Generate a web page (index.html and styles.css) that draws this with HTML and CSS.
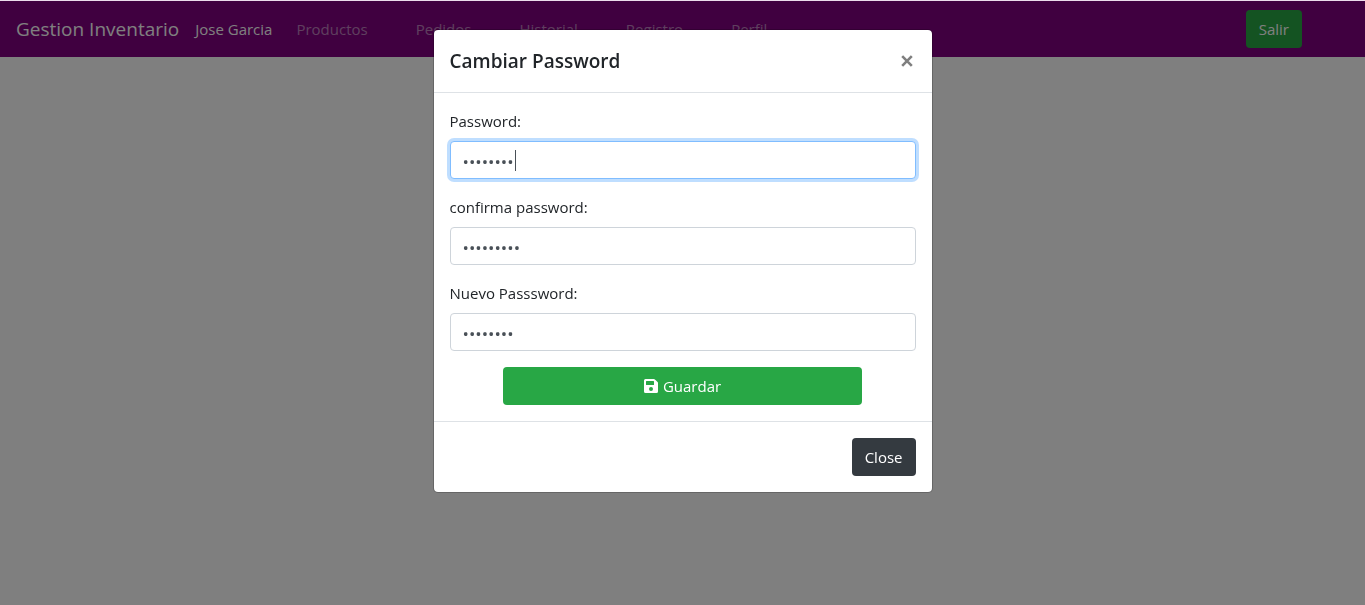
FILE: index.html
```html
<!DOCTYPE html>
<html lang="es">
<head>
<meta charset="utf-8">
<meta name="viewport" content="width=device-width, initial-scale=1">
<title>Gestion Inventario</title>
<link rel="stylesheet" href="styles.css">
</head>
<body>
<header class="navbar">
  <a class="brand" href="#">Gestion Inventario</a>
  <nav class="nav">
    <a class="nav-link active" href="#">Jose Garcia</a>
    <a class="nav-link" href="#">Productos</a>
    <a class="nav-link" href="#">Pedidos</a>
    <a class="nav-link" href="#">Historial</a>
    <a class="nav-link" href="#">Registro</a>
    <a class="nav-link" href="#">Perfil</a>
  </nav>
  <button class="btn btn-success" type="button">Salir</button>
</header>

<div class="backdrop">
  <div class="modal" role="dialog" aria-modal="true" aria-labelledby="modal-title">
    <div class="modal-header">
      <h5 class="modal-title" id="modal-title">Cambiar Password</h5>
      <button class="close" type="button" aria-label="Cerrar">
        <svg width="12" height="12" viewBox="0 0 12 12" aria-hidden="true"><path d="M1.2 1.2 10.8 10.8M10.8 1.2 1.2 10.8" fill="none" stroke="currentColor" stroke-width="2.6"/></svg>
      </button>
    </div>
    <form class="modal-body">
      <div class="form-group">
        <label for="password">Password:</label>
        <div class="field">
          <input class="form-control" id="password" type="password" value="password" autofocus>
          <span class="caret" aria-hidden="true"></span>
        </div>
      </div>
      <div class="form-group">
        <label for="confirm">confirma password:</label>
        <input class="form-control" id="confirm" type="password" value="passwords">
      </div>
      <div class="form-group">
        <label for="new-password">Nuevo Passsword:</label>
        <input class="form-control" id="new-password" type="password" value="password">
      </div>
      <div class="form-action">
        <button class="btn btn-success btn-block" type="button">
          <svg width="14" height="14" viewBox="0 0 448 448" aria-hidden="true"><path fill="currentColor" fill-rule="evenodd" d="M434 98 350 14A48 48 0 0 0 316 0H48A48 48 0 0 0 0 48V400A48 48 0 0 0 48 448H400A48 48 0 0 0 448 400V132A48 48 0 0 0 434 98ZM224 384A64 64 0 1 1 224 256A64 64 0 0 1 224 384ZM320 79V180A12 12 0 0 1 308 192H76A12 12 0 0 1 64 180V76A12 12 0 0 1 76 64H305Q320 64 320 79Z"/></svg>
          Guardar
        </button>
      </div>
    </form>
    <div class="modal-footer">
      <button class="btn btn-dark" type="button">Close</button>
    </div>
  </div>
</div>
</body>
</html>
```
FILE: styles.css
```css
* { box-sizing: border-box; }

body {
  margin: 0;
  border-top: 1px solid #ecdcec;
  background: #fff;
  color: #212529;
  font-family: "Open Sans", "Noto Sans", sans-serif;
  font-size: 15px;
  line-height: 24px;
}

.navbar {
  display: flex;
  align-items: center;
  padding: 8px 63px 8px 16px;
  background: #800080;
}

.brand {
  margin-right: 16px;
  color: #fff;
  font-size: 19px;
  line-height: 40px;
  text-decoration: none;
}

.nav {
  display: flex;
  flex: 1;
  gap: 48px;
}

.nav-link {
  color: rgba(255, 255, 255, 0.5);
  text-decoration: none;
}

.nav-link.active {
  margin-right: -24px;
  color: #fff;
}

.btn {
  padding: 6px 12px;
  border: 1px solid transparent;
  border-radius: 4px;
  color: #fff;
  font: inherit;
  cursor: pointer;
}

.btn-success { background: #28a745; }

.btn-dark { background: #343a40; }

.btn-block {
  display: flex;
  align-items: center;
  justify-content: center;
  gap: 5px;
  width: 100%;
}

.backdrop {
  position: fixed;
  inset: 1px 0 0;
  padding: 28px 8px;
  overflow: auto;
  background: rgba(0, 0, 0, 0.5);
}

.modal {
  max-width: 500px;
  margin: 0 auto;
  border: 1px solid rgba(0, 0, 0, 0.2);
  border-radius: 5px;
  background: #fff;
  background-clip: padding-box;
}

.modal-header {
  display: flex;
  align-items: center;
  justify-content: space-between;
  padding: 16px;
  border-bottom: 1px solid #dee2e6;
}

.modal-title {
  margin: 0;
  font-size: 19px;
  font-weight: 600;
  line-height: 30px;
}

.close {
  display: flex;
  padding: 3px;
  border: 0;
  background: none;
  color: #7f7f7f;
  cursor: pointer;
}

.modal-body {
  padding: 16px;
}

.form-group {
  display: flex;
  flex-direction: column;
  gap: 8px;
  margin-bottom: 16px;
}

.field {
  position: relative;
  display: flex;
}

.form-control {
  width: 100%;
  height: 38px;
  padding: 7px 12px 5px;
  border: 1px solid #ced4da;
  border-radius: 4px;
  background: #fff;
  color: #495057;
  font: inherit;
  font-size: 17px;
  caret-color: transparent;
}

.form-control:focus {
  border-color: #80bdff;
  outline: 0;
  box-shadow: 0 0 0 3px rgba(0, 123, 255, 0.25);
}

.form-control:focus + .caret {
  position: absolute;
  top: 9px;
  left: 65px;
  width: 1px;
  height: 21px;
  background: #495057;
}

.form-action {
  width: 77%;
  margin: 0 auto;
}

.modal-footer {
  display: flex;
  justify-content: flex-end;
  padding: 16px;
  border-top: 1px solid #dee2e6;
}
```
